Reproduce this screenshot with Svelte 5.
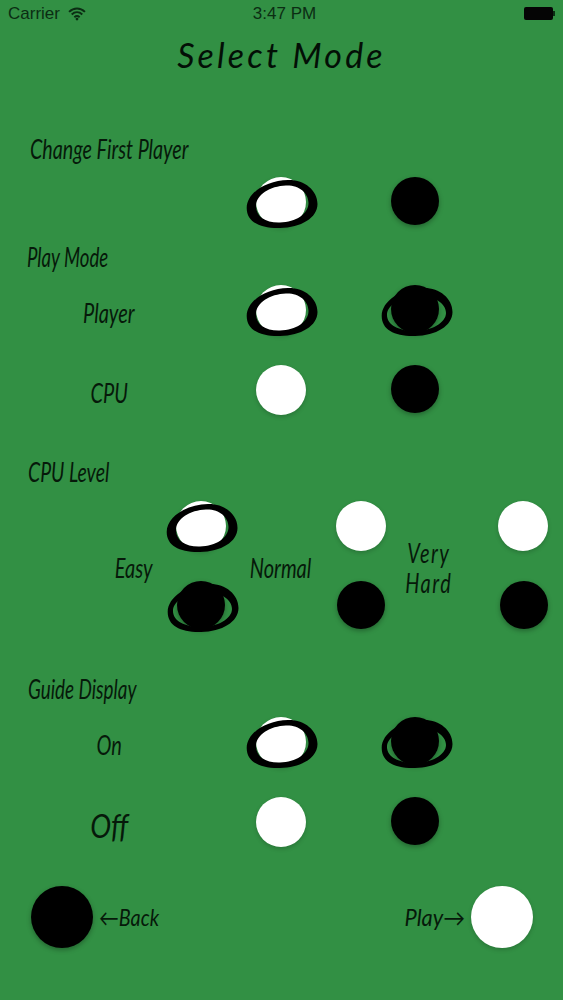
<script>
  const playRows = [
    { label: "Player", white: true, black: true },
    { label: "CPU", white: false, black: false }
  ];
  const guideRows = [
    { label: "On", white: true, black: true },
    { label: "Off", white: false, black: false, big: true }
  ];
  // one column per piece, the labels span both rows between them
  const levelCols = [
    { col: 2, selWhite: true, selBlack: true },
    { col: 4, selWhite: false, selBlack: false },
    { col: 6, selWhite: false, selBlack: false }
  ];
  const ringOuter = "M.7 29C.7 14 20 1.5 42 1C58 .5 71.5 11 71.5 25C71.5 39 55 48.5 34 49C14 49.5 .7 43 .7 29Z";
  const ringInner = {
    white: "M10 27C10 38 20 44 34 43.5C50 43 62.5 35 62.5 24C62.5 14 53 6 40 6.5C24 7 10 16 10 27Z",
    black: "M6 28C6 38 18 44 34 44C50 44 65 36 65 26C65 16 53 9 38 9C22 9 6 17 6 28Z"
  };
</script>

{#snippet piece(color, selected)}
  <div class="piece {color}">
    {#if selected}
      <svg class="ring" width="72" height="50" viewBox="0 0 72 50" aria-hidden="true">
        <path fill-rule="evenodd" d="{ringOuter}{ringInner[color]}" />
      </svg>
    {/if}
  </div>
{/snippet}

{#snippet modeRow(row)}
  <div class="row">
    <span class="label" class:bigger={row.big}>{row.label}</span>
    {@render piece("white", row.white)}
    {@render piece("black", row.black)}
  </div>
{/snippet}

<div class="page">
  <div class="status">
    <div class="carrier">
      Carrier
      <svg width="18" height="14" viewBox="0 0 17 13" aria-hidden="true">
        <path d="M1 4.5C5.5 0.2 11.5 0.2 16 4.5" />
        <path d="M3.5 7C6.5 4.2 10.5 4.2 13.5 7" />
        <path d="M6 9.5C7.5 8.2 9.5 8.2 11 9.5" />
        <circle cx="8.5" cy="11.3" r="1.3" />
      </svg>
    </div>
    <div class="time">3:47 PM</div>
    <div class="battery"></div>
  </div>

  <h1>Select Mode</h1>

  <h2 class="first"><span>Change First Player</span></h2>
  <div class="row under">
    <span></span>
    {@render piece("white", true)}
    {@render piece("black", false)}
  </div>

  <h2 class="play"><span>Play Mode</span></h2>
  <div class="rows under">
    {#each playRows as row}
      {@render modeRow(row)}
    {/each}
  </div>

  <h2 class="level"><span>CPU Level</span></h2>
  <div class="levels">
    <span class="label easy">Easy</span>
    <span class="label normal">Normal</span>
    <span class="label hard">Very<br />Hard</span>
    {#each levelCols as c}
      <div class="cell top" style="grid-column: {c.col}">{@render piece("white", c.selWhite)}</div>
      <div class="cell bottom" style="grid-column: {c.col}">{@render piece("black", c.selBlack)}</div>
    {/each}
  </div>

  <h2 class="guide"><span>Guide Display</span></h2>
  <div class="rows under">
    {#each guideRows as row}
      {@render modeRow(row)}
    {/each}
  </div>

  <div class="footer">
    <div class="nav">
      <div class="big black"></div>
      <span class="label small back">←Back</span>
    </div>
    <div class="nav">
      <span class="label small forward">Play→</span>
      <div class="big white"></div>
    </div>
  </div>
</div>

<style>
  :global(body) {
    margin: 0;
  }

  .page {
    width: 563px;
    height: 1000px;
    overflow: hidden;
    background: #329044;
    color: #06190a;
    font-family: Lato, "Liberation Sans", sans-serif;
  }

  .status {
    height: 24px;
    display: grid;
    grid-template-columns: 1fr auto 1fr;
    align-items: center;
    padding: 3px 10px 0 8px;
    box-sizing: border-box;
    font-family: "Liberation Sans", sans-serif;
    font-size: 17px;
    color: #0b2d13;
  }

  .time {
    margin-left: 8px;
  }

  .carrier {
    display: flex;
    align-items: center;
    gap: 8px;
  }

  .carrier svg path {
    fill: none;
    stroke: #0b2d13;
    stroke-width: 1.9;
  }

  .carrier svg circle {
    fill: #0b2d13;
  }

  .battery {
    justify-self: end;
    width: 29px;
    height: 13px;
    background: #050505;
    border-radius: 2px;
    position: relative;
  }

  .battery::after {
    content: "";
    position: absolute;
    right: -2px;
    top: 4px;
    width: 2px;
    height: 5px;
    background: #0b2d13;
  }

  h1 {
    margin: 0;
    height: 62px;
    line-height: 62px;
    text-align: center;
    font-size: 34px;
    font-weight: 400;
    font-style: italic;
    letter-spacing: 3.2px;
    color: #030f06;
  }

  h2 {
    margin: 0 0 0 28px;
    height: 30px;
    line-height: 30px;
    font-size: 27px;
    font-weight: 400;
    font-style: italic;
  }

  h2 span {
    display: inline-block;
    white-space: nowrap;
    transform: scaleX(0.72);
    transform-origin: left center;
  }

  h2.first {
    margin-top: 48px;
    margin-left: 30px;
  }

  h2.first span {
    transform: scaleX(0.73);
  }

  h2.play {
    margin-top: 15px;
    margin-left: 27px;
  }

  h2.play span {
    transform: scaleX(0.69);
  }

  h2.level {
    margin-top: 42px;
  }

  h2.guide {
    margin-top: 43px;
  }

  h2.guide span {
    transform: scaleX(0.7);
  }

  .under {
    margin-top: 13px;
  }

  .rows {
    display: flex;
    flex-direction: column;
    gap: 30px;
  }

  .row {
    display: grid;
    grid-template-columns: 218px 126px 142px;
    justify-items: center;
    align-items: center;
  }

  .row .label {
    margin-top: 6px;
  }

  .label {
    display: inline-block;
    font-size: 27px;
    font-style: italic;
    line-height: 30px;
    text-align: center;
    transform: scaleX(0.74);
    white-space: nowrap;
  }

  .label.bigger {
    font-size: 33px;
    transform: scaleX(0.85);
  }

  .levels {
    margin-top: 14px;
    display: grid;
    grid-template-columns: 80px 54px 106px 54px 82px 78px;
    grid-template-rows: 50px 50px;
    row-gap: 30px;
    padding-left: 94px;
    justify-items: center;
    align-items: center;
  }

  .levels .label {
    grid-row: 1 / span 2;
    margin-top: 3px;
  }

  .easy {
    grid-column: 1;
  }

  .normal {
    grid-column: 3;
  }

  .hard {
    grid-column: 5;
    letter-spacing: 2px;
  }

  .top {
    grid-row: 1;
  }

  .bottom {
    grid-row: 2;
  }

  .cell:nth-last-child(-n + 2) {
    justify-self: end;
  }

  .piece {
    position: relative;
    width: 50px;
    height: 50px;
    border-radius: 50%;
  }

  .piece.black {
    width: 48px;
    height: 48px;
    margin-bottom: 2px;
  }

  .white {
    background: #fff;
    box-shadow: 0 2px 4px rgba(0, 0, 0, 0.18);
  }

  .black {
    background: #000;
    box-shadow: 0 2px 5px rgba(0, 0, 0, 0.3);
  }

  .ring {
    position: absolute;
    left: -10px;
    top: 2px;
  }

  .ring path {
    fill: #000;
  }

  .footer {
    margin-top: 39px;
    padding: 0 30px 0 31px;
    display: flex;
    justify-content: space-between;
  }

  .nav {
    display: flex;
    align-items: center;
    gap: 6px;
  }

  .big {
    width: 62px;
    height: 62px;
    border-radius: 50%;
  }

  .small {
    width: 60px;
    font-size: 23px;
  }

  .back {
    text-align: left;
    transform: scaleX(0.86);
    transform-origin: left center;
  }

  .forward {
    margin-right: 2px;
    transform: scaleX(0.95);
  }
</style>
